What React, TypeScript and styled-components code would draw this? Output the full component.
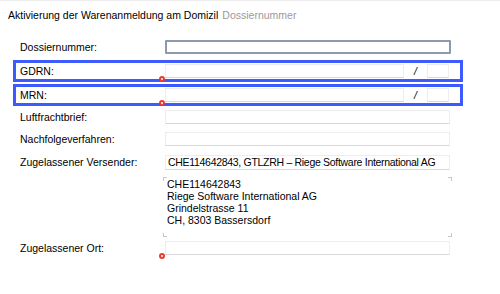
import React from "react";
import styled, { createGlobalStyle, css } from "styled-components";

const Global = createGlobalStyle`
  html, body { margin: 0; padding: 0; background: #ffffff; }
  body { font-family: "Liberation Sans", Arial, sans-serif; font-size: 10.5px; color: #000; }
`;

const Page = styled.div`
  width: 500px;
  height: 294px;
  background: #ffffff;
  border-top: 1px solid #ececec;
  box-sizing: border-box;
  overflow: hidden;
`;

const Header = styled.div`
  height: 27px;
  display: flex;
  align-items: center;
  padding-left: 8px;
  color: #000;
  white-space: nowrap;
`;

const Sub = styled.span`
  color: #9a9a9a;
  margin-left: 4px;
`;

const Form = styled.div`
  display: flex;
  flex-direction: column;
  padding-top: 8px;
`;

const Row = styled.div<{ $hl?: boolean; $h?: number; $mt?: number }>`
  box-sizing: border-box;
  margin-left: 13px;
  width: 450px;
  height: ${(p) => p.$h ?? 22}px;
  margin-top: ${(p) => p.$mt ?? 0}px;
  display: flex;
  align-items: center;
  padding-left: 4px;
  border: 3px solid ${(p) => (p.$hl ? "#3d5afe" : "transparent")};
`;

const TopRow = styled(Row)`
  align-items: flex-start;
`;

const Label = styled.div`
  width: 145px;
  flex: none;
  color: #000;
  white-space: nowrap;
`;

const Field = styled.div`
  position: relative;
  display: flex;
  align-items: center;
`;

const Input = styled.div<{ $w: number; $focus?: boolean; $h?: number }>`
  box-sizing: border-box;
  width: ${(p) => p.$w}px;
  height: ${(p) => p.$h ?? 14}px;
  background: #fff;
  border: 1px solid #ededed;
  border-bottom-color: #d8d8d8;
  color: #000;
  display: flex;
  align-items: center;
  padding-left: 2px;
  white-space: nowrap;
  overflow: hidden;
  letter-spacing: -0.3px;
  ${(p) =>
    p.$focus &&
    css`
      border: 2px solid #8d99ad;
      border-radius: 1px;
    `}
`;

const Slash = styled.span`
  width: 23px;
  text-align: center;
  color: #000;
  font-style: italic;
`;

const Marker = styled.span`
  position: absolute;
  left: -6px;
  bottom: -4px;
  box-sizing: border-box;
  width: 6px;
  height: 6px;
  border: 2px solid #ea3b35;
  border-radius: 50%;
  background: #fff;
`;

const Address = styled.div`
  position: relative;
  margin-left: -2px;
  width: 289px;
  height: 60px;
  box-sizing: border-box;
  padding: 1px 0 0 4px;
  line-height: 12px;
  color: #000;
  white-space: nowrap;
`;

const Corner = styled.span<{ $pos: "tl" | "tr" | "bl" | "br" }>`
  position: absolute;
  width: 3px;
  height: 3px;
  border-color: #c8c8c8;
  border-style: solid;
  border-width: 0;
  ${(p) => p.$pos === "tl" && css`top: 0; left: 0; border-top-width: 1px; border-left-width: 1px;`}
  ${(p) => p.$pos === "tr" && css`top: 0; right: 0; border-top-width: 1px; border-right-width: 1px;`}
  ${(p) => p.$pos === "bl" && css`bottom: 0; left: 0; border-bottom-width: 1px; border-left-width: 1px;`}
  ${(p) => p.$pos === "br" && css`bottom: 0; right: 0; border-bottom-width: 1px; border-right-width: 1px;`}
`;

export default function App() {
  return (
    <>
      <Global />
      <Page>
        <Header>
          Aktivierung der Warenanmeldung am Domizil<Sub>Dossiernummer</Sub>
        </Header>
        <Form>
          <Row>
            <Label>Dossiernummer:</Label>
            <Field>
              <Input $w={286} $focus />
            </Field>
          </Row>
          <Row $hl $mt={2}>
            <Label>GDRN:</Label>
            <Field>
              <Input $w={239} />
              <Marker />
            </Field>
            <Slash>/</Slash>
            <Input $w={22} />
          </Row>
          <Row $hl $mt={2}>
            <Label>MRN:</Label>
            <Field>
              <Input $w={239} />
              <Marker />
            </Field>
            <Slash>/</Slash>
            <Input $w={22} />
          </Row>
          <Row>
            <Label>Luftfrachtbrief:</Label>
            <Field>
              <Input $w={285} />
            </Field>
          </Row>
          <Row>
            <Label>Nachfolgeverfahren:</Label>
            <Field>
              <Input $w={285} />
            </Field>
          </Row>
          <Row $mt={1}>
            <Label>Zugelassener Versender:</Label>
            <Field>
              <Input $w={285} $h={15}>
                CHE114642843, GTLZRH – Riege Software International AG
              </Input>
            </Field>
          </Row>
          <TopRow $h={62} $mt={1}>
            <Label />
            <Address>
              <Corner $pos="tl" />
              <Corner $pos="tr" />
              <Corner $pos="bl" />
              <Corner $pos="br" />
              CHE114642843
              <br />
              Riege Software International AG
              <br />
              Grindelstrasse 11
              <br />
              CH, 8303 Bassersdorf
            </Address>
          </TopRow>
          <Row $mt={1}>
            <Label>Zugelassener Ort:</Label>
            <Field>
              <Input $w={285} />
              <Marker />
            </Field>
          </Row>
        </Form>
      </Page>
    </>
  );
}
